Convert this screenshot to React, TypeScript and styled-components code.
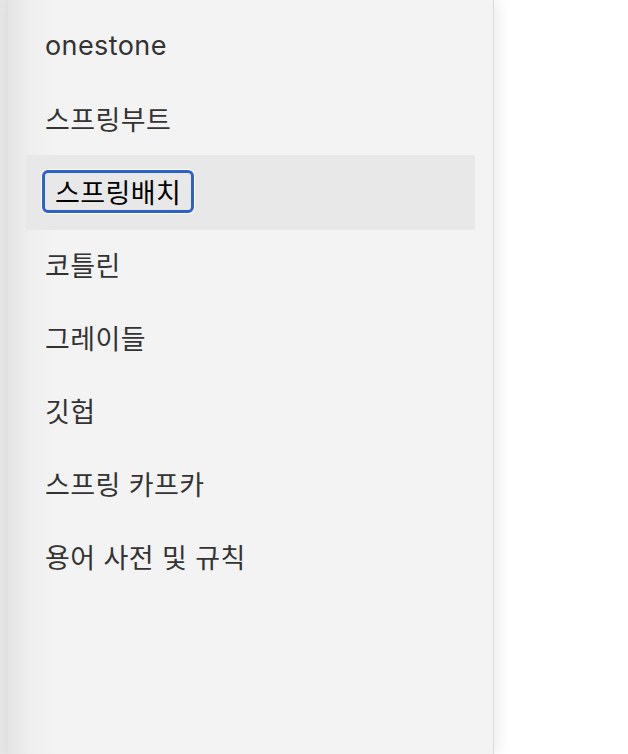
import styled, { createGlobalStyle } from 'styled-components';

const GlobalStyle = createGlobalStyle`
    html, body {
        margin: 0;
        padding: 0;
        background: #ffffff;
    }
`;

const StyledPage = styled.div`
    display: flex;
    min-height: 754px;
    background: #ffffff;
`;

const StyledEdge = styled.div`
    width: 8px;
    flex-shrink: 0;
    background: #e6e6e6;
`;

const StyledSidebar = styled.nav`
    width: 486px;
    flex-shrink: 0;
    box-sizing: border-box;
    padding: 9px 18px 0;
    background: linear-gradient(to right, #e4e4e4 0px, #efefef 22px, #f3f3f3 48px);
    border-right: 1px solid #dcdcdc;
    box-shadow: 3px 0 14px rgba(0, 0, 0, 0.09);
`;

const StyledList = styled.ul`
    display: flex;
    flex-direction: column;
    list-style: none;
    margin: 0;
    padding: 0;
`;

const StyledItem = styled.li<{ $selected?: boolean }>`
    display: flex;
    align-items: center;
    height: ${p => (p.$selected ? 75 : 73)}px;
    margin-bottom: ${p => (p.$selected ? -2 : 0)}px;
    padding-left: ${p => (p.$selected ? 16 : 19)}px;
    background: ${p => (p.$selected ? '#e8e8e8' : 'transparent')};
    font-family: Inter, "Noto Sans CJK KR", sans-serif;
    font-size: 27px;
    letter-spacing: 0.4px;
    color: #333333;
`;

const StyledFocusedLink = styled.span`
    display: inline-flex;
    align-items: center;
    height: 37px;
    margin-top: -3px;
    padding: 0 10px;
    border: 3px solid #2f62c7;
    border-radius: 6px;
    box-shadow: 0 0 0 1px #ffffff;
    color: #000000;
`;

const items = [
    'onestone',
    '스프링부트',
    '스프링배치',
    '코틀린',
    '그레이들',
    '깃헙',
    '스프링 카프카',
    '용어 사전 및 규칙',
];

const selectedIndex = 2;

const App = () => {
    return (
        <StyledPage>
            <GlobalStyle />
            <StyledEdge />
            <StyledSidebar>
                <StyledList>
                    {items.map((item, i) => (
                        <StyledItem key={item} $selected={i === selectedIndex}>
                            {i === selectedIndex
                                ? <StyledFocusedLink>{item}</StyledFocusedLink>
                                : item}
                        </StyledItem>
                    ))}
                </StyledList>
            </StyledSidebar>
        </StyledPage>
    );
};

export default App;
